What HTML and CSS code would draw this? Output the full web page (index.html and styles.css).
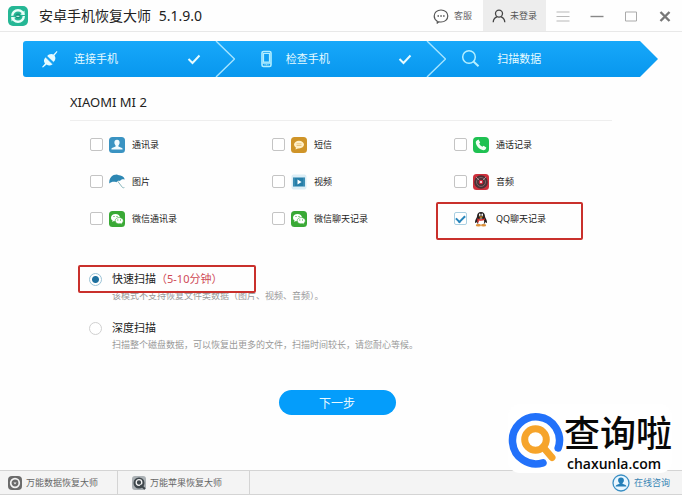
FILE: index.html
```html
<!DOCTYPE html>
<html lang="zh-CN">
<head>
<meta charset="utf-8">
<meta name="viewport" content="width=device-width, initial-scale=1">
<title>安卓手机恢复大师</title>
<link rel="stylesheet" href="styles.css">
</head>
<body>
<header class="titlebar">
  <svg class="app-logo" viewBox="0 0 20 20" aria-hidden="true"><rect width="20" height="20" rx="5" fill="#25b795"/><circle cx="10" cy="10" r="5.800" fill="none" stroke="#e9fff9" stroke-width="2.400"/><path d="M3 10.300h3.500M13.500 9.500H17" stroke="#25b795" stroke-width="1.200"/><path d="M16.500 4.500v4.300h-4.300zM3.500 15.500v-4.300h4.300z" fill="#e9fff9"/><circle cx="10" cy="10" r="2.500" fill="#17927a"/><path d="M8.400 10.300h3" stroke="#e9fff9"/></svg>
  <h1 class="app-name">安卓手机恢复大师 <span class="version">5.1.9.0</span></h1>
  <a class="support" href="#support">
    <svg class="chat-icon" viewBox="0 0 16 16" aria-hidden="true"><path d="M4.2 13.2C2.200 12 1.200 10.200 1.200 8c0-3.600 3-6 6.800-6s6.800 2.400 6.800 6-3 6-6.800 6c-.8 0-1.500-.1-2.100-.3L4.300 15z" fill="none" stroke="#555" stroke-width="1.200"/><path d="M4.500 7.300H6V8.800H4.500zM7.300 7.300h1.500v1.500H7.300zM10.100 7.300h1.500v1.500h-1.500z" fill="#555"/></svg>
    客服
  </a>
  <button class="account" type="button">
    <svg class="user-icon" viewBox="0 0 14 14" aria-hidden="true"><circle cx="7" cy="4.600" r="3.500" fill="none" stroke="#444" stroke-width="1.300"/><path d="M1.200 13.200c.2-3.200 1.600-4.700 3.700-5.400M12.800 13.200c-.2-3.200-1.600-4.700-3.700-5.400" fill="none" stroke="#444" stroke-width="1.300"/></svg>
    未登录
  </button>
  <div class="window-controls">
    <button type="button" aria-label="菜单"><svg viewBox="0 0 14 14"><path d="M.5 3h13M.5 7.500h13M.5 12h13" stroke="#b8b8b8"/></svg></button>
    <button type="button" aria-label="最小化"><svg viewBox="0 0 14 14"><path d="M.5 7.500h13" stroke="#888" stroke-width="1.400"/></svg></button>
    <button type="button" aria-label="最大化"><svg viewBox="0 0 14 14"><path d="M1.500 3h11v9h-11z" fill="none" stroke="#aaa"/></svg></button>
    <button type="button" aria-label="关闭"><svg viewBox="0 0 14 14"><path d="M2.500 3l9 9M11.500 3l-9 9" stroke="#777" stroke-width="2.400"/></svg></button>
  </div>
</header>

<ol class="steps">
  <li class="step">
    <svg class="step-icon" viewBox="0 0 28 20" aria-hidden="true"><g fill="#e6fbff"><path d="M6 18l3-3.500c-1.600-2-1.300-4.300.6-6.200l7 7c-2 1.600-4.200 1.600-6 .3L7 18.600z"/><path d="M11 7.200c1.900-2.400 4.500-2.900 6.500-1.600L20.700 2l.8.7-3 3.700c1.500 2.100 1.200 4.700-1 6.700z"/></g><path d="M9.800 8.300l7 7M11 7l6.800 6.500" stroke="#3bb5fb" stroke-width=".7"/></svg>
    <span class="step-label">连接手机</span>
    <svg class="step-check" viewBox="0 0 14 14" aria-hidden="true"><path d="M1.500 7l4 4 7-7.500" fill="none" stroke="#e6fbff" stroke-width="2"/></svg>
    <svg class="step-divider" viewBox="0 0 20 36" aria-hidden="true"><path d="M1 0l18.500 18L1 36" fill="none" stroke="#a5e4ff" stroke-width="1.400"/></svg>
  </li>
  <li class="step">
    <svg class="step-icon" viewBox="0 0 28 20" aria-hidden="true"><rect x="14" y="2.500" width="9" height="15" rx="1.500" fill="none" stroke="#b4efff" stroke-width="1.600"/><path d="M15.500 4.500h6v8.500h-6z" fill="none" stroke="#b4efff" stroke-width="1.200"/><path d="M14.500 14h8" stroke="#b4efff" stroke-width="1.400"/><path d="M16.500 15.800h4" stroke="#b4efff" stroke-dasharray="1 .5"/></svg>
    <span class="step-label">检查手机</span>
    <svg class="step-check" viewBox="0 0 14 14" aria-hidden="true"><path d="M1.500 7l4 4 7-7.500" fill="none" stroke="#e6fbff" stroke-width="2"/></svg>
    <svg class="step-divider" viewBox="0 0 20 36" aria-hidden="true"><path d="M1 0l18.500 18L1 36" fill="none" stroke="#a5e4ff" stroke-width="1.400"/></svg>
  </li>
  <li class="step">
    <svg class="step-icon" viewBox="0 0 28 20" aria-hidden="true"><circle cx="10" cy="8" r="6.300" fill="none" stroke="#b4efff" stroke-width="1.500"/><path d="M14.500 12.500l5 4.800" stroke="#b4efff" stroke-width="2"/></svg>
    <span class="step-label">扫描数据</span>
  </li>
</ol>

<main class="content">
  <h2 class="device">XIAOMI MI 2</h2>

  <div class="types">
    <label class="type"><input type="checkbox"><svg viewBox="0 0 16 16" aria-hidden="true"><rect width="16" height="16" rx="3.500" fill="#3a93c2"/><path d="M8 2.800c1.800 0 2.700 1.200 2.600 2.900-.1 1.300-.6 2.100-1.200 2.800v1l3.600 1.600c.5.300.6.800.6 1.500H2.400c0-.7.100-1.200.6-1.500l3.600-1.600v-1C6 7.800 5.500 7 5.400 5.700 5.300 4 6.200 2.800 8 2.800z" fill="#f2fbff"/></svg>通讯录</label>
    <label class="type"><input type="checkbox"><svg viewBox="0 0 16 16" aria-hidden="true"><rect width="16" height="16" rx="3.500" fill="#cf9428"/><ellipse cx="8" cy="7.600" rx="5" ry="3.800" fill="#fff0c8"/><path d="M5 10l-.5 2.600L8 11z" fill="#fff0c8"/><path d="M5.500 6.800h5M5.500 8.500h5" stroke="#e5b968" stroke-width=".8"/></svg>短信</label>
    <label class="type"><input type="checkbox"><svg viewBox="0 0 16 16" aria-hidden="true"><rect width="16" height="16" rx="4" fill="#1fc152"/><path d="M4.200 3.200l1.300-.6 1.700 2.900-1 1.100c.7 1.500 1.700 2.500 3.100 3.200l1.200-1 2.800 1.800c-.2 1.600-1.400 2.700-3 2.600C6.600 12.600 3 9 2.800 5.500c0-1 .5-1.800 1.400-2.300z" fill="#f3fff5"/></svg>通话记录</label>
    <label class="type"><input type="checkbox"><svg viewBox="0 0 16 16" aria-hidden="true"><path d="M.3 9.500C-.2 4.500 3 .5 8 .6l1 .500c3.500.2 6 1.600 6.800 4.300-2.200-.6-3.900 0-4.800 1.500-1.500-.4-2.700.1-3.500 1.300C4.700 7.300 2.200 7.700.3 9.500z" fill="#2d87b3"/><path d="M8.500 7l5 6.500c.7.900 1.700.4 1.400-.5" fill="none" stroke="#8ab7bd"/></svg>图片</label>
    <label class="type"><input type="checkbox"><svg viewBox="0 0 16 16" aria-hidden="true"><rect x=".5" y=".5" width="15" height="15" rx="2" fill="#dceef6"/><rect x="2" y="3.500" width="12" height="9" fill="#267fa9"/><path d="M3 4.500v7M13 4.500v7" stroke="#79b7d2" stroke-dasharray="1 1"/><path d="M6.500 5.600v4.800L10.600 8z" fill="#fff"/></svg>视频</label>
    <label class="type"><input type="checkbox"><svg viewBox="0 0 16 16" aria-hidden="true"><rect width="16" height="16" rx="3.500" fill="#ce2f3b"/><circle cx="8" cy="8" r="6.800" fill="#4c3035"/><circle cx="8" cy="8" r="4.500" fill="none" stroke="#8b7075" stroke-width=".8"/><path d="M3 3l3.500 3.500M13 3L9.500 6.500" stroke="#a59095"/><circle cx="8" cy="8" r="2.300" fill="#d8263b"/><circle cx="8" cy="8" r="1" fill="#fff"/></svg>音频</label>
    <label class="type"><input type="checkbox"><svg viewBox="0 0 16 16" aria-hidden="true"><rect width="16" height="16" rx="3.500" fill="#39a935"/><path d="M6.500 3C3.900 3 2 4.600 2 6.700c0 1.200.6 2.200 1.600 2.900L3.200 11l1.700-.9c1.200.3 2.300.3 3.300 0C10 9.600 11 8.300 11 6.700 11 4.600 9.100 3 6.500 3z" fill="#fff"/><path d="M10.200 6.500c2.300 0 4.100 1.400 4.100 3.200 0 1-.5 1.900-1.400 2.500l.3 1.200-1.400-.7c-3.100.7-5.600-.9-5.600-3 0-1.800 1.800-3.200 4-3.200z" fill="#fff" stroke="#39a935" stroke-width=".6"/><path d="M4.500 5.500h1M7.500 5.500h1M8.300 9h1M11 9h1" stroke="#39a935"/></svg>微信通讯录</label>
    <label class="type"><input type="checkbox"><svg viewBox="0 0 16 16" aria-hidden="true"><rect width="16" height="16" rx="3.500" fill="#39a935"/><path d="M6.500 3C3.900 3 2 4.600 2 6.700c0 1.200.6 2.200 1.600 2.900L3.200 11l1.700-.9c1.200.3 2.300.3 3.300 0C10 9.600 11 8.300 11 6.700 11 4.600 9.100 3 6.500 3z" fill="#fff"/><path d="M10.200 6.500c2.300 0 4.100 1.400 4.100 3.200 0 1-.5 1.900-1.400 2.500l.3 1.200-1.400-.7c-3.100.7-5.600-.9-5.600-3 0-1.800 1.800-3.200 4-3.200z" fill="#fff" stroke="#39a935" stroke-width=".6"/><path d="M4.500 5.500h1M7.500 5.500h1M8.300 9h1M11 9h1" stroke="#39a935"/></svg>微信聊天记录</label>
    <label class="type marked"><input type="checkbox" checked><svg viewBox="0 0 16 16" aria-hidden="true"><path d="M8 1C5.400 1 4 2.900 4 5.500c0 1-1.900 3-2 5.500 0 1.400.7 1.300 1.600.1C4.300 13.200 5.800 14 8 14s3.700-.8 4.400-2.900c.9 1.200 1.600 1.300 1.600-.1-.1-2.500-2-4.500-2-5.500C12 2.900 10.600 1 8 1z" fill="#252021"/><ellipse cx="8" cy="10.700" rx="3.200" ry="3.200" fill="#fff"/><ellipse cx="6.800" cy="3.700" rx=".8" ry="1.200" fill="#fff"/><ellipse cx="9.200" cy="3.700" rx=".8" ry="1.200" fill="#fff"/><path d="M5.500 5.500h5L8 6.900z" fill="#f4a62a"/><path d="M4.200 7.300c2.600 1.200 5 1.200 7.600 0v1.600c-2 .8-4 1-6 .6v2H4.500z" fill="#d32929"/><ellipse cx="5.400" cy="14.200" rx="2.600" ry="1.200" fill="#dd8e37"/><ellipse cx="10.600" cy="14.200" rx="2.600" ry="1.200" fill="#dd8e37"/></svg>QQ聊天记录</label>
  </div>

  <div class="modes">
    <div class="mode">
      <label class="mode-title marked"><input type="radio" name="mode" checked><span>快速扫描<span class="duration">（5-10分钟）</span></span></label>
      <p class="mode-note">该模式不支持恢复文件类数据（图片、视频、音频）。</p>
    </div>
    <div class="mode">
      <label class="mode-title"><input type="radio" name="mode"><span>深度扫描</span></label>
      <p class="mode-note">扫描整个磁盘数据，可以恢复出更多的文件，扫描时间较长，请您耐心等候。</p>
    </div>
  </div>

  <div class="actions"><button class="next" type="button">下一步</button></div>
</main>

<footer class="statusbar">
  <a class="product" href="#data"><svg viewBox="0 0 14 14" aria-hidden="true"><rect width="14" height="14" rx="4" fill="#6b6b6b"/><circle cx="7" cy="7" r="4.300" fill="none" stroke="#f4f4f4" stroke-width="1.700"/><path d="M5.500 6.500h3L7 8.500z" fill="#f4f4f4"/></svg>万能数据恢复大师</a>
  <a class="product" href="#apple"><svg viewBox="0 0 14 14" aria-hidden="true"><rect width="14" height="14" rx="3" fill="#aab0b4"/><circle cx="7" cy="7" r="5.500" fill="#3f474c"/><circle cx="7" cy="6.500" r="2.800" fill="none" stroke="#f4f4f4" stroke-width="1.300"/><path d="M8.500 9l4.500 4" stroke="#3f474c" stroke-width="2"/></svg>万能苹果恢复大师</a>
  <a class="consult" href="#consult"><svg viewBox="0 0 18 18" aria-hidden="true"><circle cx="9" cy="9" r="8" fill="#e9f7ff" stroke="#3a8fc4" stroke-width="1.300"/><path d="M9 3.500c2 0 3 1.200 2.900 2.900-.1 1.300-.7 2.100-1.400 2.700v.6l3 1.200c.6.300.9.900.9 1.700H3.600c0-.8.300-1.400.9-1.700l3-1.200v-.6c-.7-.6-1.300-1.400-1.400-2.700C6 4.700 7 3.500 9 3.500z" fill="#257fb8"/></svg>在线咨询</a>
</footer>

<aside class="watermark">
  <svg class="watermark-logo" viewBox="0 0 56 56" aria-hidden="true"><path d="M35 49.800A23.500 23.500 0 1 1 50.200 35" fill="none" stroke="#2271fa" stroke-width="7.500" stroke-linecap="round"/><path d="M36 35l8.500 9.500" stroke="#fff" stroke-width="12" stroke-linecap="round"/><circle cx="27.500" cy="26.500" r="10.800" fill="none" stroke="#f6a42b" stroke-width="7"/><path d="M35 34l9 10.500" stroke="#f6a42b" stroke-width="7" stroke-linecap="round"/></svg>
  <div class="watermark-text"><span class="watermark-name">查询啦</span><span class="watermark-url">chaxunla.com</span></div>
</aside>
</body>
</html>
```
FILE: styles.css
```css
*,
*::before,
*::after {
  box-sizing: border-box;
}

body {
  position: relative;
  display: flex;
  flex-direction: column;
  min-height: 100vh;
  margin: 0;
  background: #fefefe;
  color: #222;
  font-family: "Noto Sans", "Noto Sans CJK SC", sans-serif;
  font-size: 9px;
}

button {
  padding: 0;
  border: 0;
  background: none;
  color: inherit;
  font: inherit;
}

a {
  color: inherit;
  text-decoration: none;
}

svg {
  flex: none;
}

h1, h2, p, ol {
  margin: 0;
  padding: 0;
  font-weight: 400;
}

/* Title bar */
.titlebar {
  display: flex;
  align-items: center;
  height: 32px;
  padding-left: 8px;
  border-bottom: 1px solid #e8e8e8;
}

.app-logo {
  width: 20px;
  height: 20px;
}

.app-name {
  flex: 1;
  margin-left: 11px;
  font-size: 14px;
  line-height: 20px;
  white-space: nowrap;
}

.version {
  margin-left: 4px;
}

.support {
  display: flex;
  align-items: center;
  gap: 5px;
  margin-right: 11px;
  color: #666;
}

.chat-icon {
  width: 16px;
  height: 16px;
}

.account {
  display: flex;
  align-items: center;
  justify-content: center;
  gap: 4px;
  align-self: stretch;
  width: 63px;
  background: #ededed;
  color: #555;
}

.user-icon {
  width: 14px;
  height: 14px;
}

.window-controls {
  display: flex;
  align-self: stretch;
}

.window-controls button {
  display: grid;
  place-items: center;
  width: 34px;
}

.window-controls svg {
  width: 14px;
  height: 14px;
}

/* Progress steps */
.steps {
  display: flex;
  height: 36px;
  margin: 9px 24px 0 23px;
  border-radius: 3px 0 0 3px;
  background: linear-gradient(#17a8fa, #0897ee);
  clip-path: polygon(0 0, calc(100% - 18px) 0, 100% 50%, calc(100% - 18px) 100%, 0 100%);
  color: #e6fbff;
  list-style: none;
}

.step {
  display: flex;
  flex: 1;
  align-items: center;
  padding-left: 13px;
}

.step-icon {
  width: 28px;
  height: 20px;
}

.step-label {
  flex: 1;
  margin-left: 10px;
  font-size: 11px;
  line-height: 16px;
}

.step-check {
  width: 14px;
  height: 14px;
  margin-right: 14px;
}

.step-divider {
  width: 20px;
  height: 36px;
}

/* Content */
.content {
  flex: 1;
  padding: 15px 70px 20px;
}

.device {
  padding-bottom: 8px;
  border-bottom: 1px solid #eee;
  font-size: 13px;
  line-height: 20px;
}

.types {
  display: grid;
  grid-template-columns: repeat(3, 1fr);
  grid-auto-rows: 37px;
  margin: 5px -24px 0 20px;
}

.type {
  position: relative;
  display: flex;
  align-items: center;
}

.type svg {
  width: 16px;
  height: 16px;
  margin: 0 7px 0 6px;
}

input {
  flex: none;
  width: 13px;
  height: 13px;
  margin: 0;
  border: 1px solid #c4c4c4;
  background: #fff;
  appearance: none;
}

input[type="checkbox"] {
  border-radius: 2px;
}

input[type="checkbox"]:checked {
  display: grid;
  place-items: center;
  border-color: #a9cfe2;
}

input[type="checkbox"]:checked::before {
  width: 9px;
  height: 6px;
  border: solid #2785bb;
  border-width: 0 0 2px 2px;
  content: "";
  transform: translateY(-1px) rotate(-45deg);
}

input[type="radio"] {
  border-color: #d0d0d0;
  border-radius: 50%;
}

input[type="radio"]:checked {
  border-color: #9cc3d6;
  background: radial-gradient(circle, #1d709f 3px, #fff 4px);
}

/* Highlight frames */
.marked::after {
  position: absolute;
  border: 2px solid #c9302c;
  border-radius: 2px;
  content: "";
  pointer-events: none;
}

.type.marked::after {
  top: 2px;
  left: -18px;
  width: 147px;
  height: 38px;
}

.mode-title.marked::after {
  top: -5px;
  left: -11px;
  width: 178px;
  height: 28px;
}

.modes {
  display: grid;
  gap: 15px;
  margin: 33px 0 0 19px;
}

.mode-title {
  position: relative;
  display: flex;
  align-items: center;
  gap: 10px;
  width: fit-content;
  font-size: 11px;
  line-height: 18px;
}

.duration {
  color: #cf4a56;
}

.mode-note {
  padding-left: 23px;
  color: #999;
  line-height: 16px;
}

.actions {
  display: flex;
  justify-content: center;
  margin-top: 37px;
  padding-right: 8px;
}

.next {
  width: 117px;
  height: 25px;
  border-radius: 13px;
  background: #049dfb;
  color: #e9f9ff;
  font-size: 12px;
}

/* Status bar */
.statusbar {
  display: flex;
  height: 25px;
  border: solid #d4d4d4;
  border-width: 1px 0;
  background: #f4f4f4;
  color: #666;
}

.product,
.consult {
  display: flex;
  align-items: center;
  gap: 4px;
}

.product {
  width: 118px;
  padding-left: 8px;
  border-right: 1px solid #d4d4d4;
}

.product + .product {
  width: 132px;
  padding-left: 14px;
}

.product svg {
  width: 14px;
  height: 14px;
}

.consult {
  position: relative;
  z-index: 2;
  margin-left: auto;
  padding-right: 12px;
  color: #3a85b5;
}

.consult svg {
  width: 18px;
  height: 18px;
}

/* Site watermark */
.watermark {
  position: absolute;
  right: 10px;
  bottom: 22px;
  display: flex;
  align-items: center;
  padding: 6px 0 1px;
  border-radius: 12px;
  background: #fff;
  color: #080808;
}

.watermark-logo {
  width: 56px;
  height: 56px;
}

.watermark-text {
  display: flex;
  flex-direction: column;
  padding-top: 4px;
}

.watermark-name {
  font-family: "Liberation Sans", "Noto Sans CJK SC", sans-serif;
  font-size: 36px;
  font-weight: 500;
  line-height: 42px;
}

.watermark-url {
  padding-left: 3px;
  font-family: "Open Sans", sans-serif;
  font-size: 14px;
  font-weight: 600;
  line-height: 16px;
}
```
